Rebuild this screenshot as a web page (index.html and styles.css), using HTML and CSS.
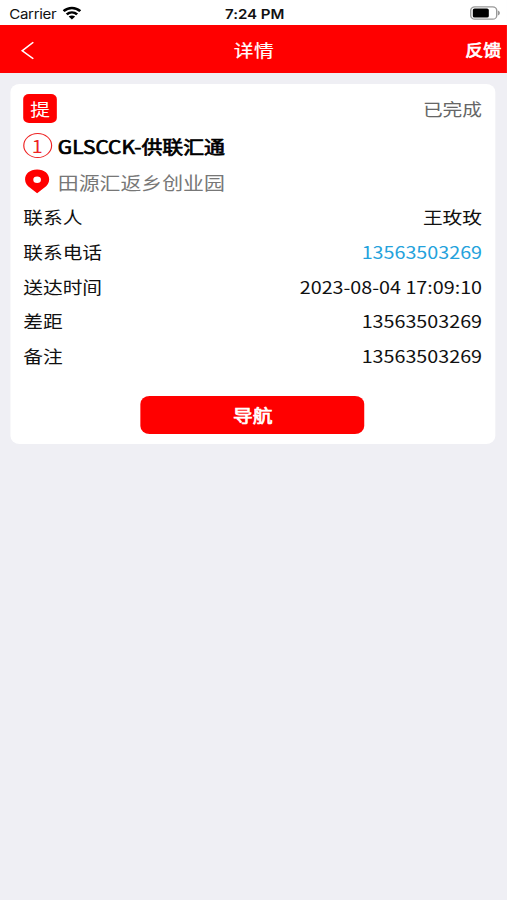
FILE: index.html
```
<!DOCTYPE html>
<html lang="zh-CN">
<head>
<meta charset="utf-8">
<title>详情</title>
<link rel="stylesheet" href="styles.css">
</head>
<body>
<div class="screen">
  <div class="status">
    <div class="carrier"><span>Carrier</span>
      <svg class="wifi" width="16" height="14" viewBox="0 0 16 14"><g fill="none" stroke="#000" stroke-width="2.4"><path d="M.8 5.2C5 1 11 1 15.2 5.2"/><path d="M3.5 8.4c2.7-2.5 6.3-2.5 9 0"/></g><path d="M5.2 10.5c1.7-1.4 3.9-1.4 5.6 0L8 13.5z"/></svg>
    </div>
    <div class="time">7:24 PM</div>
    <svg class="battery" width="27" height="14" viewBox="0 0 27 14"><rect x=".8" y=".8" width="22.4" height="12.4" rx="3.5" fill="#fff" stroke="#999" stroke-width="1.2"/><rect x="2.6" y="2.5" width="13.8" height="9" rx="1.5"/><path d="M24.2 4.5c2.3.9 2.3 4.1 0 5z" fill="#999"/></svg>
  </div>
  <header class="nav">
    <svg class="back" width="12" height="19" viewBox="0 0 12 19"><path d="M10.7 1.2 1.2 9.7l9.5 8.1" fill="none" stroke="#fff" stroke-width="1.5"/></svg>
    <h1>详情</h1>
    <span class="feedback">反馈</span>
  </header>
  <main class="card">
    <div class="top"><span class="tag">提</span><span class="state">已完成</span></div>
    <div class="line title"><span class="icon"><span class="num">1</span></span><h2>GLSCCK-供联汇通</h2></div>
    <div class="line address"><span class="icon"><svg width="22" height="25" viewBox="0 0 22 25"><path fill="#f00" fill-rule="evenodd" d="M11 .5C4.7.5.6 4.800.6 10.400c0 3.700 1.900 6.200 4.300 8.300L11 24.300l6.100-5.600c2.400-2.100 4.300-4.600 4.300-8.300C21.400 4.800 17.300.5 11 .5zM11 7.500a3.300 3.300 0 1 1 0 6.600a3.300 3.300 0 0 1 0-6.600z"/></svg></span><span>田源汇返乡创业园</span></div>
    <dl>
      <div><dt>联系人</dt><dd>王玫玫</dd></div>
      <div><dt>联系电话</dt><dd class="phone">13563503269</dd></div>
      <div><dt>送达时间</dt><dd>2023-08-04 17:09:10</dd></div>
      <div><dt>差距</dt><dd>13563503269</dd></div>
      <div><dt>备注</dt><dd>13563503269</dd></div>
    </dl>
    <button class="go">导航</button>
  </main>
</div>
</body>
</html>
```
FILE: styles.css
```
* { box-sizing: border-box; margin: 0; padding: 0; }
html, body { height: 900px; overflow: hidden; background: #efeff4; }
body { font-family: "Noto Sans CJK SC", sans-serif; color: #111; }
/* The whole interface is drawn slightly wide. */
.screen { width: 437.07px; height: 900px; transform: scaleX(1.16); transform-origin: 0 0; background: #efeff4; }
.status { display: grid; grid-template-columns: 1fr auto 1fr; align-items: center; height: 25px; padding: 2px 5px 0 8px; background: #fff; font: 13px/20px Inter, sans-serif; }
.carrier { display: flex; align-items: center; gap: 5px; letter-spacing: -.3px; }
.wifi { display: block; margin-top: -1px; }
.time { font-weight: 600; letter-spacing: -.05px; margin-left: -1px; }
.battery { justify-self: end; margin-top: -1px; }
.nav { display: grid; grid-template-columns: 1fr auto 1fr; align-items: center; height: 48px; padding: 0 5px 0 18px; background: #f00; color: #fff; }
.nav h1 { font-size: 17px; line-height: 24px; font-weight: 400; letter-spacing: .5px; margin: 1px 0 0 -12px; -webkit-text-stroke: .2px #fff; }
.back { display: block; margin-top: 2px; }
.feedback { justify-self: end; font-size: 15.5px; line-height: 24px; font-weight: 400; -webkit-text-stroke: .7px #fff; }
.card { margin: 11px 10.5px 0 9px; height: 359.5px; padding: 10px 11px 0; border-radius: 8px; background: #fff; }
.top { display: flex; align-items: center; justify-content: space-between; height: 29px; }
.tag { width: 29px; height: 29px; border-radius: 5px; background: #f00; color: #fff; font-size: 17px; line-height: 29px; text-align: center; }
.state { font-size: 17px; line-height: 29px; color: #666; }
.line { display: flex; align-items: center; font-size: 18px; }
.icon { display: flex; justify-content: center; width: 25px; margin: 0 5.3px 0 -.5px; }
.title { height: 45px; }
.title h2 { font-size: 18px; line-height: 26px; font-weight: 400; color: #000; -webkit-text-stroke: .7px #000; }
.num { width: 25px; height: 25px; border: 1px solid #e22; border-radius: 50%; color: #e22; font-size: 17px; line-height: 23px; text-align: center; }
.address { height: 27px; color: #777; }
.address svg { display: block; }
dl { padding-top: 5.4px; }
dl div { display: flex; justify-content: space-between; height: 34.65px; font-size: 17px; line-height: 34.65px; }
.phone { color: #24a2dc; }
.go { display: block; width: 193px; height: 37.5px; margin: 22.5px auto 0; border: 0; border-radius: 8px; background: #f00; color: #fff; font: 400 17px/37.5px "Noto Sans CJK SC", sans-serif; -webkit-text-stroke: .7px #fff; }
```
